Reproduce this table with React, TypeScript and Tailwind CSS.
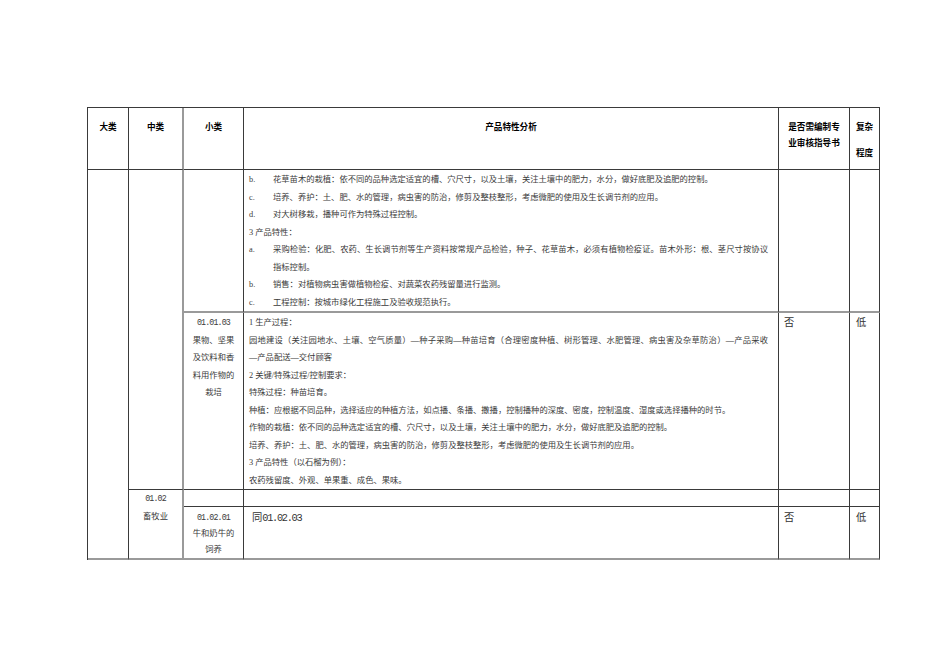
const head = "font-['Noto_Sans_CJK_SC',sans-serif] font-bold text-[8.6px] leading-[16px] text-black text-center align-top pt-[10px]";
const body = "font-['Liberation_Serif','Noto_Sans_CJK_SC',serif] text-[8.3px] leading-[17.5px] text-[#3a3a3a]";
const mono = "font-['Liberation_Mono',monospace] tracking-[-0.85px]";
const big = "font-['Liberation_Serif','Noto_Sans_CJK_SC',serif] text-[10.3px] text-[#333]";

// borders, per side so colours never fight
const R = "border-r border-r-[#3a3a3a]";
const R2 = "border-r-2 border-r-[#9a9a9a]";
const B = "border-b border-b-[#3a3a3a]";
const B2 = "border-b-2 border-b-[#9a9a9a]";

type Line = { label?: string; text: string; justify?: boolean; indent?: boolean };

const rowA: Line[] = [
  { label: "b.", text: "花草苗木的栽植：依不同的品种选定适宜的槽、穴尺寸，以及土壤，关注土壤中的肥力，水分，做好底肥及追肥的控制。" },
  { label: "c.", text: "培养、养护：土、肥、水的管理，病虫害的防治，修剪及整枝整形，考虑微肥的使用及生长调节剂的应用。" },
  { label: "d.", text: "对大树移栽，播种可作为特殊过程控制。" },
  { text: "3 产品特性：" },
  {
    label: "a.",
    text: "采购检验：化肥、农药、生长调节剂等生产资料按常规产品检验，种子、花草苗木，必须有植物检疫证。苗木外形：根、茎尺寸按协议",
    justify: true,
  },
  { indent: true, text: "指标控制。" },
  { label: "b.", text: "销售：对植物病虫害做植物检疫、对蔬菜农药残留量进行监测。" },
  { label: "c.", text: "工程控制：按城市绿化工程施工及验收规范执行。" },
];

const rowB: Line[] = [
  { text: "1 生产过程：" },
  {
    text: "园地建设（关注园地水、土壤、空气质量）—种子采购—种苗培育（合理密度种植、树形管理、水肥管理、病虫害及杂草防治）—产品采收",
    justify: true,
  },
  { text: "—产品配送—交付顾客" },
  { text: "2 关键/特殊过程/控制要求：" },
  { text: "特殊过程：种苗培育。" },
  { text: "种植：应根据不同品种，选择适应的种植方法，如点播、条播、撒播，控制播种的深度、密度，控制温度、湿度或选择播种的时节。" },
  { text: "作物的栽植：依不同的品种选定适宜的槽、穴尺寸，以及土壤，关注土壤中的肥力，水分，做好底肥及追肥的控制。" },
  { text: "培养、养护：土、肥、水的管理，病虫害的防治，修剪及整枝整形，考虑微肥的使用及生长调节剂的应用。" },
  { text: "3 产品特性（以石榴为例）：" },
  { text: "农药残留度、外观、单果重、成色、果味。" },
];

function TextLine({ line }: { line: Line }) {
  const just = line.justify ? "text-justify [text-align-last:justify]" : "";
  if (line.label) {
    return (
      <div className="flex">
        <span className="w-[24px] shrink-0">{line.label}</span>
        <span className={`flex-1 ${just}`}>{line.text}</span>
      </div>
    );
  }
  return <div className={`${line.indent ? "pl-[24px]" : ""} ${just}`}>{line.text}</div>;
}

export default function App() {
  return (
    <div className="w-[950px] h-[672px] bg-white pt-[107px] pl-[87px]">
      <table className="table-fixed border-separate border-spacing-0 w-[793px] border-t border-l border-t-[#3a3a3a] border-l-[#3a3a3a]">
        <colgroup>
          <col className="w-[41px]" />
          <col className="w-[55px]" />
          <col className="w-[60px]" />
          <col className="w-[535px]" />
          <col className="w-[71px]" />
          <col className="w-[30px]" />
        </colgroup>
        <thead>
          <tr>
            <th className={`${head} ${R} ${B} h-[62px] p-0 pt-[10px]`}>大类</th>
            <th className={`${head} ${R2} ${B} p-0 pt-[10px]`}>中类</th>
            <th className={`${head} ${R} ${B} p-0 pt-[10px]`}>小类</th>
            <th className={`${head} ${R} ${B} p-0 pt-[10px]`}>产品特性分析</th>
            <th className={`${head} ${R} ${B} p-0 pt-[10px]`}>
              <div>是否需编制专</div>
              <div>业审核指导书</div>
            </th>
            <th className={`${head} ${R} ${B} p-0 pt-[10px]`}>
              <div>复杂</div>
              <div className="mt-[10px]">程度</div>
            </th>
          </tr>
        </thead>
        <tbody className={body}>
          {/* 01.01 rows */}
          <tr>
            <td rowSpan={4} className={`${R} ${B2} p-0`} />
            <td rowSpan={2} className={`${R2} ${B} p-0`} />
            <td className={`${R} ${B2} p-0`} />
            <td className={`${R} ${B2} align-top pl-[5px] pr-[10px] pt-[1px] h-[143px]`}>
              {rowA.map((l, i) => (
                <TextLine key={i} line={l} />
              ))}
            </td>
            <td className={`${R} ${B2} p-0`} />
            <td className={`${R} ${B2} p-0`} />
          </tr>
          <tr>
            <td className={`${R} ${B} align-top text-center pt-[1px] h-[177px]`}>
              <div className={mono}>01.01.03</div>
              <div>果物、坚果</div>
              <div>及饮料和香</div>
              <div>料用作物的</div>
              <div>栽培</div>
            </td>
            <td className={`${R} ${B} align-top pl-[5px] pr-[10px] pt-[1px]`}>
              {rowB.map((l, i) => (
                <TextLine key={i} line={l} />
              ))}
            </td>
            <td className={`${R} ${B} align-top pl-[5px] pt-[1px]`}>
              <span className={big}>否</span>
            </td>
            <td className={`${R} ${B} align-top pl-[6px] pt-[1px]`}>
              <span className={big}>低</span>
            </td>
          </tr>
          {/* 01.02 rows */}
          <tr>
            <td rowSpan={2} className={`${R2} ${B2} align-top text-center p-0 leading-[18px]`}>
              <div className={mono}>01.02</div>
              <div>畜牧业</div>
            </td>
            <td className={`${R} ${B} h-[17px] p-0`} />
            <td className={`${R} ${B} p-0`} />
            <td className={`${R} ${B} p-0`} />
            <td className={`${R} ${B} p-0`} />
          </tr>
          <tr>
            <td className={`${R} ${B2} align-top text-center pt-[3px] leading-[16px] h-[53px]`}>
              <div className={mono}>01.02.01</div>
              <div>牛和奶牛的</div>
              <div>饲养</div>
            </td>
            <td className={`${R} ${B2} align-top pl-[8px] pt-[3px] leading-[16px]`}>
              <span className={big}>
                同<span className="font-['Liberation_Mono',monospace] tracking-[-1.3px]">01.02.03</span>
              </span>
            </td>
            <td className={`${R} ${B2} align-top pl-[5px] pt-[3px] leading-[16px]`}>
              <span className={big}>否</span>
            </td>
            <td className={`${R} ${B2} align-top pl-[6px] pt-[3px] leading-[16px]`}>
              <span className={big}>低</span>
            </td>
          </tr>
        </tbody>
      </table>
    </div>
  );
}
